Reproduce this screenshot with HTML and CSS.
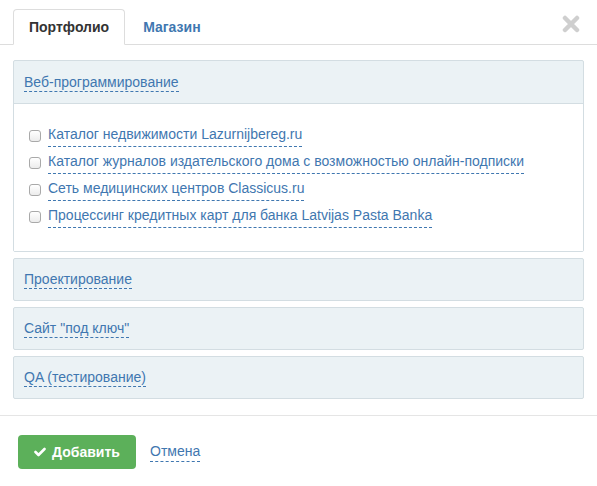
FILE: index.html
```html
<!DOCTYPE html>
<html lang="ru">
<head>
  <meta charset="UTF-8" />
  <meta name="viewport" content="width=device-width, initial-scale=1.0">
  <title>Портфолио</title>
  <link rel="stylesheet" href="styles.css">
</head>
<body>
  <div class="dialog">
    <div class="tabs">
      <a class="tab active" href="#">Портфолио</a>
      <a class="tab" href="#">Магазин</a>
      <button class="close" title="Закрыть">
        <svg width="18" height="18" viewBox="0 0 18 18">
          <path d="M3 3 L15 15 M15 3 L3 15" stroke="#cfcfcf" stroke-width="4.5" stroke-linecap="round" />
        </svg>
      </button>
    </div>

    <div class="groups">
      <div class="group open">
        <div class="group-head"><span class="dash">Веб-программирование</span></div>
        <ul class="group-body">
          <li><label><input type="checkbox"> <span class="dash">Каталог недвижимости Lazurnijbereg.ru</span></label></li>
          <li><label><input type="checkbox"> <span class="dash">Каталог журналов издательского дома с возможностью онлайн-подписки</span></label></li>
          <li><label><input type="checkbox"> <span class="dash">Сеть медицинских центров Classicus.ru</span></label></li>
          <li><label><input type="checkbox"> <span class="dash">Процессинг кредитных карт для банка Latvijas Pasta Banka</span></label></li>
        </ul>
      </div>
      <div class="group">
        <div class="group-head"><span class="dash">Проектирование</span></div>
      </div>
      <div class="group">
        <div class="group-head"><span class="dash">Сайт "под ключ"</span></div>
      </div>
      <div class="group">
        <div class="group-head"><span class="dash">QA (тестирование)</span></div>
      </div>
    </div>

    <div class="footer">
      <button class="btn-add">
        <svg width="12" height="10" viewBox="0 0 12 10">
          <path d="M1.5 5 L4.5 8 L10.5 2" fill="none" stroke="#fff" stroke-width="2.6" stroke-linecap="round" stroke-linejoin="round" />
        </svg>
        Добавить
      </button>
      <a class="cancel dash" href="#">Отмена</a>
    </div>
  </div>
</body>
</html>
```

FILE: styles.css
```css
* { margin: 0; padding: 0; box-sizing: border-box; }
body {
  font-family: "Helvetica Neue", "Liberation Sans", Arial, sans-serif;
  font-size: 14px;
  color: #333;
  background: #fff;
}
a { text-decoration: none; }

/* tabs */
.tabs {
  display: flex;
  align-items: flex-end;
  padding: 9px 13px 0;
  border-bottom: 1px solid #ddd;
  height: 45px;
}
.tab {
  display: block;
  height: 36px;
  line-height: 34px;
  padding: 0 15px;
  margin-right: 2px;
  margin-bottom: -1px;
  font-weight: bold;
  font-size: 14px;
  color: #3f77b0;
  border: 1px solid transparent;
  border-radius: 4px 4px 0 0;
}
.tab.active {
  color: #333;
  background: #fff;
  border-color: #ddd;
  border-bottom-color: #fff;
}
.close {
  margin-left: auto;
  align-self: flex-start;
  margin-top: 6px;
  margin-right: 4px;
  background: none;
  border: none;
  cursor: pointer;
  line-height: 0;
}

/* accordion groups */
.groups {
  padding: 15px 13px 16px;
  display: flex;
  flex-direction: column;
  gap: 6px;
}
.group {
  border: 1px solid #d3dde2;
  border-radius: 2px;
  background: #ebf2f5;
}
.group-head {
  height: 41px;
  line-height: 41px;
  padding: 0 10px;
}
.dash {
  color: #3f77b0;
  border-bottom: 1px dashed #3f77b0;
  padding-bottom: 1px;
}
.group.open .group-head { border-bottom: 1px solid #d3dde2; height: 43px; line-height: 43px; }
.group-body {
  list-style: none;
  background: #fff;
  padding: 19px 15px 20px;
  height: 147px;
}
.group-body li {
  height: 27px;
  line-height: 22px;
}
.group-body label {
  display: flex;
  align-items: center;
  gap: 7px;
  cursor: pointer;
}
.group-body input {
  appearance: none;
  width: 12px;
  height: 12px;
  border: 1px solid #a9a9a9;
  border-radius: 3px;
  background: linear-gradient(#fff, #ececec);
  margin-top: 1px;
}

/* footer */
.footer {
  border-top: 1px solid #e5e5e5;
  padding: 19px 18px;
  display: flex;
  align-items: center;
  gap: 14px;
}
.btn-add {
  display: flex;
  align-items: center;
  gap: 6px;
  height: 34px;
  width: 118px;
  justify-content: center;
  background: #5cb05a;
  border: none;
  border-radius: 4px;
  color: #fff;
  font-family: inherit;
  font-size: 14px;
  font-weight: bold;
  cursor: pointer;
}
.cancel { line-height: 18px; }
```
